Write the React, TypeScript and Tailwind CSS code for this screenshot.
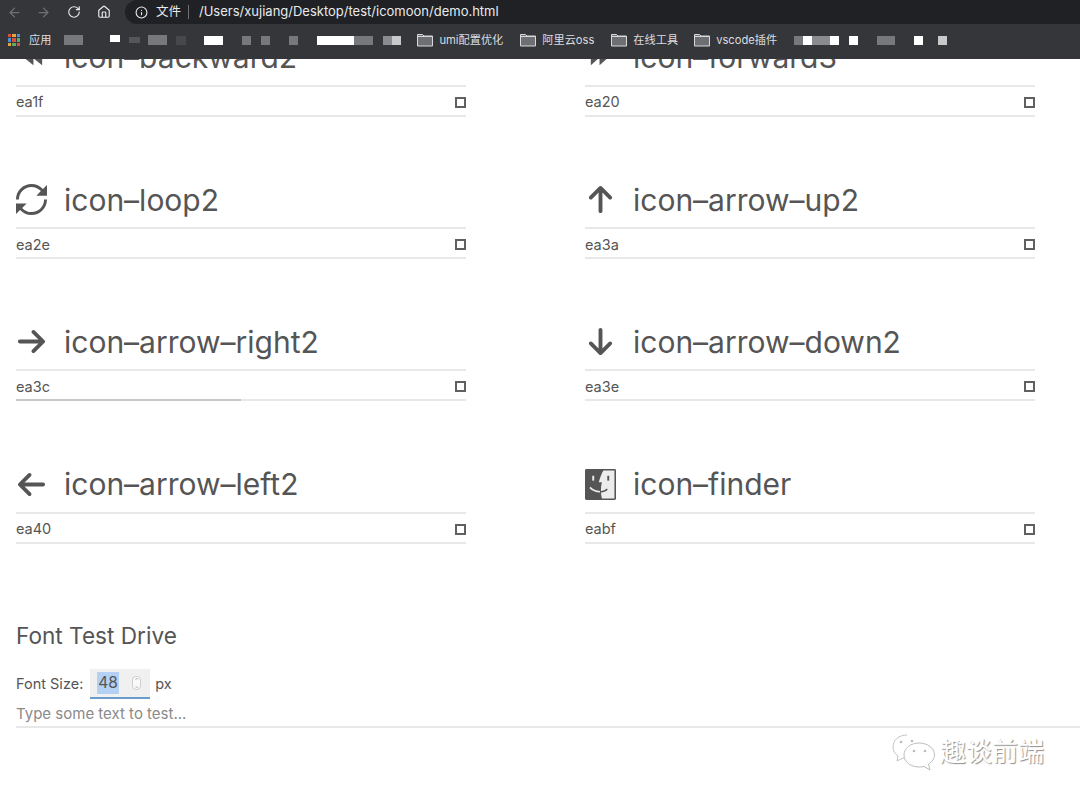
import React from "react";
import { ArrowLeft, ArrowRight, RotateCw, House, Info } from "lucide-react";

const ARROW = "M19.414 27.414l10-10c0.781-0.781 0.781-2.047 0-2.828l-10-10c-0.781-0.781-2.047-0.781-2.828 0s-0.781 2.047 0 2.828l6.586 6.586h-19.172c-1.105 0-2 0.895-2 2s0.895 2 2 2h19.172l-6.586 6.586c-0.39 0.39-0.586 0.902-0.586 1.414s0.195 1.024 0.586 1.414c0.781 0.781 2.047 0.781 2.828 0z";

function Glyph({ children }: { children: React.ReactNode }) {
  return (
    <svg viewBox="0 0 32 32" className="w-[31px] h-[31px] shrink-0 fill-[#555555]">
      {children}
    </svg>
  );
}

const icons: Record<string, React.ReactNode> = {
  backward: <Glyph><path d="M18 8v16l-10-8zM27 8v16l-10-8z" /></Glyph>,
  forward: <Glyph><path d="M6 8v16l9-8zM15 8v16l9-8z" /></Glyph>,
  loop: (
    <Glyph>
      <path d="M27.802 5.197c-2.925-3.194-7.13-5.197-11.803-5.197-8.837 0-16 7.163-16 16h3c0-7.18 5.82-13 13-13 3.844 0 7.298 1.669 9.678 4.322l-4.678 4.678h11v-11l-4.198 4.197z" />
      <path d="M29 16c0 7.18-5.82 13-13 13-3.844 0-7.298-1.669-9.678-4.322l4.678-4.678h-11v11l4.198-4.197c2.925 3.194 7.13 5.197 11.803 5.197 8.837 0 16-7.163 16-16h-3z" />
    </Glyph>
  ),
  up: <Glyph><path transform="rotate(-90 16 16)" d={ARROW} /></Glyph>,
  right: <Glyph><path d={ARROW} /></Glyph>,
  down: <Glyph><path transform="rotate(90 16 16)" d={ARROW} /></Glyph>,
  left: <Glyph><path transform="rotate(180 16 16)" d={ARROW} /></Glyph>,
  finder: (
    <svg viewBox="0 0 32 32" className="w-[31px] h-[31px] shrink-0">
      <rect x="0" y="0" width="32" height="32" rx="1.500" fill="#555555" />
      <path d="M19 1.600h11.400v28.800H17.500c-.6-2-.9-4-1-6.200 2.600-.1 5-1 7-2.800l-1-1.200c-1.700 1.500-3.800 2.300-6.100 2.400 0-3 .3-6 1-9h-3.200C15.500 9 17 5 19 1.600z" fill="#ececec" />
      <rect x="7.500" y="7" width="2" height="5" fill="#ececec" />
      <rect x="23" y="7" width="2" height="5" fill="#555555" />
      <path d="M4.500 19.500c2.800 3 6.500 4.700 11 4.700v-1.600c-4 0-7.300-1.500-9.800-4.200z" fill="#ececec" />
    </svg>
  ),
};

const rows = [
  { icon: "backward", name: "icon–backward2", code: "ea1f" },
  { icon: "forward", name: "icon–forward3", code: "ea20" },
  { icon: "loop", name: "icon–loop2", code: "ea2e" },
  { icon: "up", name: "icon–arrow–up2", code: "ea3a" },
  { icon: "right", name: "icon–arrow–right2", code: "ea3c", progress: true },
  { icon: "down", name: "icon–arrow–down2", code: "ea3e" },
  { icon: "left", name: "icon–arrow–left2", code: "ea40" },
  { icon: "finder", name: "icon–finder", code: "eabf" },
];

function GlyphCard({ icon, name, code, progress }: { icon: string; name: string; code: string; progress?: boolean }) {
  return (
    <div className="w-[450px] mb-[58.33px]">
      <div className="h-[52px] pb-[3px] flex items-center gap-[17px]">
        {icons[icon]}
        <span className="text-[30px] leading-[48px] text-[#555555] whitespace-nowrap">{name}</span>
      </div>
      <div className="border-t-2 border-[#e8e8e8] h-[30px] pt-[3px] flex items-center justify-between">
        <span className="text-[14.5px] text-[#555555]">{code}</span>
        <span className="w-[11px] h-[11px] border-2 border-[#606060]" />
      </div>
      <div className="h-[2px] bg-[#e8e8e8]">
        {progress ? <div className="h-[2px] w-[225px] bg-[#c8c8c8]" /> : null}
      </div>
    </div>
  );
}

function Folder() {
  return (
    <svg viewBox="0 0 16 14" className="w-4 h-[14px] shrink-0">
      <path d="M.5 1.500h5l1.500 1.500h8.500v10H.5z" fill="#6e6f73" stroke="#d8d9dc" strokeWidth="1" />
      <path d="M1 3.500h14" stroke="#d8d9dc" strokeWidth="1" />
    </svg>
  );
}

function AppsGrid() {
  const colors = ["#d9503f", "#e8a33d", "#4a90d9", "#4a90d9", "#d9503f", "#5bae5b", "#e8a33d", "#5bae5b", "#d9503f"];
  return (
    <div className="grid grid-cols-3 gap-px w-[12px] h-[12px] shrink-0">
      {colors.map((c, i) => (
        <span key={i} className={c === "#d9503f" ? "bg-[#d9503f]" : c === "#e8a33d" ? "bg-[#e8a33d]" : c === "#4a90d9" ? "bg-[#4a90d9]" : "bg-[#5bae5b]"} />
      ))}
    </div>
  );
}

function Bookmark({ label, className }: { label: string; className: string }) {
  return (
    <div className={"flex items-center gap-[6px] shrink-0 " + className}>
      <Folder />
      <span className="text-[11.2px] text-[#dcdde0] whitespace-nowrap">{label}</span>
    </div>
  );
}

export default function App() {
  return (
    <div className="w-[1080px] h-[800px] overflow-hidden relative bg-white flex flex-col font-['Inter','Noto_Sans_CJK_SC',sans-serif]">
      {/* browser chrome */}
      <div className="h-[24px] bg-[#35363a] flex items-center shrink-0">
        <ArrowLeft className="w-[15px] h-[15px] text-[#6f7074] ml-[7px]" />
        <ArrowRight className="w-[15px] h-[15px] text-[#6f7074] ml-[14px]" />
        <RotateCw className="w-[14px] h-[14px] text-[#e8eaed] ml-[16px]" />
        <House className="w-[14px] h-[14px] text-[#e8eaed] ml-[16px]" />
        <div className="ml-[14px] flex-1 h-[24px] bg-[#202124] rounded-l-[12px] flex items-center">
          <Info className="w-[13px] h-[13px] text-[#e8eaed] ml-[10px]" />
          <span className="ml-[8px] text-[12.5px] text-[#e8eaed]">文件</span>
          <span className="ml-[7px] w-px h-[14px] bg-[#6f7074]" />
          <span className="ml-[10px] text-[13px] text-[#e8eaed] whitespace-nowrap">/Users/xujiang/Desktop/test/icomoon/demo.html</span>
        </div>
      </div>
      <div className="h-[35px] bg-[#35363a] flex items-center shrink-0 pl-2 pb-[3px]">
        <AppsGrid />
        <span className="ml-[9px] text-[11.2px] text-[#dcdde0]">应用</span>
        <span className="ml-[13px] w-[19px] h-[10px] bg-[#77787b]" />
        <span className="ml-[27px] w-[10px] h-[7px] bg-white mb-[3px]" />
        <span className="ml-[9px] w-[11px] h-[6px] bg-[#55565a]" />
        <span className="ml-[8px] w-[19px] h-[10px] bg-[#77787b]" />
        <span className="ml-[9px] w-[10px] h-[9px] bg-[#47484c]" />
        <span className="ml-[18px] w-[19px] h-[9px] bg-white" />
        <span className="ml-[19px] w-[9px] h-[9px] bg-[#77787b]" />
        <span className="ml-[10px] w-[9px] h-[9px] bg-[#77787b]" />
        <span className="ml-[19px] w-[9px] h-[9px] bg-[#77787b]" />
        <span className="ml-[19px] w-[37px] h-[9px] bg-white" />
        <span className="w-[19px] h-[9px] bg-[#77787b]" />
        <span className="ml-[10px] w-[9px] h-[9px] bg-[#8a8b8e]" />
        <span className="w-[9px] h-[9px] bg-[#c9c9ca]" />
        <Bookmark label="umi配置优化" className="ml-[16px]" />
        <Bookmark label="阿里云oss" className="ml-[17px]" />
        <Bookmark label="在线工具" className="ml-[17px]" />
        <Bookmark label="vscode插件" className="ml-[16px]" />
        <span className="ml-[17px] w-[9px] h-[9px] bg-[#77787b]" />
        <span className="w-[9px] h-[9px] bg-white" />
        <span className="w-[18px] h-[9px] bg-[#8a8b8e]" />
        <span className="w-[9px] h-[9px] bg-white" />
        <span className="ml-[10px] w-[9px] h-[9px] bg-white" />
        <span className="ml-[19px] w-[18px] h-[9px] bg-[#77787b]" />
        <span className="ml-[19px] w-[9px] h-[9px] bg-white" />
        <span className="ml-[15px] w-[9px] h-[9px] bg-[#c9c9ca]" />
      </div>

      {/* page */}
      <div className="flex-1 overflow-hidden pl-4">
        <div className="-mt-[26.33px] grid grid-cols-[450px_450px] gap-x-[119px]">
          {rows.map((r) => (
            <GlyphCard key={r.code} {...r} />
          ))}
        </div>
        <div className="mt-[18px] text-[#555555]">
          <h2 className="text-[22.6px] leading-[32px] h-[32px]">Font Test Drive</h2>
          <div className="mt-[17px] flex items-center text-[14.5px] h-[30px]">
            <span>Font Size:</span>
            <div className="ml-[7px] w-[60px] h-[30px] bg-[#f0f0f0] border-b-2 border-[#6a9ccb] flex items-center pl-[7px] relative">
              <span className="bg-[#b4d0f3] px-px leading-[22px] text-[15.5px]">48</span>
              <span className="absolute left-[42px] top-[7px] w-[9px] h-[14px] rounded-[4px] border border-[#cfcfcf] bg-[#fafafa] flex flex-col items-center justify-center text-[5px] leading-[6px] text-[#777777]">
                <span>⌃</span>
                <span>⌄</span>
              </span>
            </div>
            <span className="ml-[5px]">px</span>
          </div>
          <div className="h-[27px] leading-[30px] text-[15px] text-[#8a8a8a]">Type some text to test...</div>
          <div className="h-[2px] bg-[#e8e8e8]" />
        </div>
      </div>

      {/* watermark */}
      <div className="absolute left-[891px] top-[733px] flex items-center">
        <svg viewBox="0 0 46 40" className="w-[46px] h-[40px]">
          <path d="M16 2C8 2 2 7 2 14c0 4 2 7 5 9l-1 5 6-3c2 .5 3 .6 5 .5" fill="#ffffff" stroke="#c4c4c4" strokeWidth="1" />
          <path d="M28 10c-8 0-15 5-15 12s7 12 15 12c2 0 3 0 5-.6l6 3.600-1.500-6c3.500-2 6-5.500 6-9 0-7-7-12-15.500-12z" fill="#ffffff" stroke="#bdbdbd" strokeWidth="1" />
          <circle cx="10" cy="9" r="1.300" fill="#bbbbbb" />
          <circle cx="21" cy="8" r="1.300" fill="#bbbbbb" />
          <circle cx="23" cy="18" r="1.300" fill="#bbbbbb" />
          <circle cx="34" cy="18" r="1.300" fill="#bbbbbb" />
        </svg>
        <span className="ml-[3px] -mt-[3px] text-[26px] leading-[36px] text-white whitespace-nowrap [text-shadow:1px_1px_1px_#8f8f8f]">趣谈前端</span>
      </div>
    </div>
  );
}
